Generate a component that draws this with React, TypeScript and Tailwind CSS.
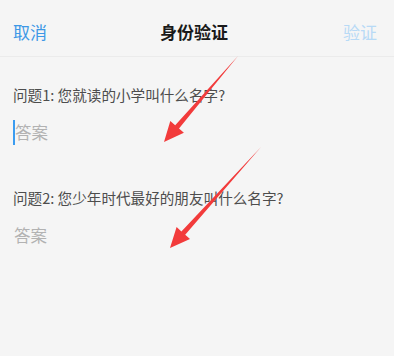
const font = { fontFamily: '"Noto Sans CJK SC", "Noto Sans", sans-serif' };

function Arrows() {
  return (
    <svg className="pointer-events-none absolute inset-0" width={394} height={356} viewBox="0 0 394 356">
      <polygon
        fill="#f23b3b"
        points="238,56 179,128.4 183.9,132.7 164,142 170.3,120.9 175.2,125.2"
      />
      <polygon
        fill="#f23b3b"
        points="261,147 185.2,234.8 190,239.1 170,248 176.6,227.1 181.4,231.4"
      />
    </svg>
  );
}

type Question = { label: string; focused: boolean };

const questions: Question[] = [
  { label: '问题1: 您就读的小学叫什么名字?', focused: true },
  { label: '问题2: 您少年时代最好的朋友叫什么名字?', focused: false },
];

function App() {
  return (
    <div className="relative w-[394px] h-[356px] overflow-hidden bg-[#f5f5f5]" style={font}>
      <div className="h-[57px] pt-[8px] pl-[13px] pr-[17px] grid grid-cols-[1fr_auto_1fr] items-center border-b border-[#ebebeb]">
        <span className="text-[17px] text-[#3d98e6]">取消</span>
        <span className="text-[17px] font-semibold text-[#1a1a1a] pr-[2px]">身份验证</span>
        <span className="text-[17px] text-[#b8daf6] justify-self-end">验证</span>
      </div>

      <div className="flex flex-col">
        {questions.map((q, i) => (
          <div key={i} className={i === 0 ? 'mt-[28px]' : 'mt-[43px]'}>
            <div className="px-[13px] h-[20px] leading-[20px] text-[14.6px] text-[#4d4d4d]">{q.label}</div>
            <div className="mt-[14px] px-[13px] h-[26px] flex items-center">
              {q.focused && <span className="w-[2px] h-[25px] bg-[#3b9cf0]" />}
              <span className={q.focused ? 'text-[16.5px] text-[#b2b2b2]' : 'text-[16.5px] text-[#b2b2b2] ml-[1px]'}>
                答案
              </span>
            </div>
          </div>
        ))}
      </div>

      <Arrows />
    </div>
  );
}

export default App;
